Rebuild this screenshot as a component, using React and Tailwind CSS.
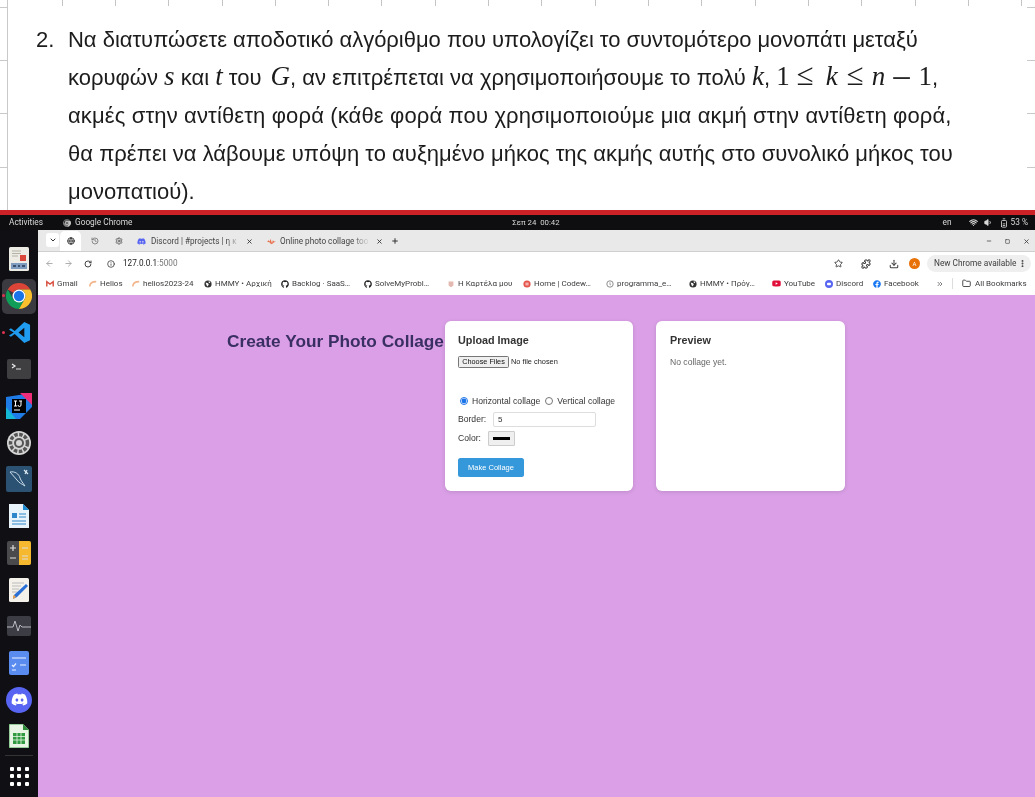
import React from "react";
import { ArrowLeft, ArrowRight, RotateCw, Info, Star, Puzzle, Download, MoreVertical, X, Minus, Plus, ChevronDown, Folder, Globe, ChevronsRight, History, Settings, Wifi, Volume1, BatteryMedium, Square } from "lucide-react";
import { FaGithub, FaDiscord, FaFacebook, FaYoutube } from "react-icons/fa";

const M = ({ children, className = "" }) => <span className={`font-['Liberation_Serif',serif] italic text-[27px] leading-[0] ${className}`}>{children}</span>;
const R = ({ children, className = "" }) => <span className={`font-['Liberation_Serif',serif] text-[27px] leading-[0] ${className}`}>{children}</span>;

function DocTicks() {
  const xs = [62, 115, 168, 222, 275, 328, 381, 435, 488, 541, 595, 648, 701, 755, 808, 861, 915, 968, 1021];
  return (
    <svg className="absolute inset-0" width="1035" height="210" aria-hidden="true">
      <path d="M7.5 0V210" stroke="#c9c9c9" strokeWidth="1" />
      {xs.map((x) => <path key={x} d={`M${x}.5 0V6`} stroke="#c4c4c4" />)}
      {[7, 60, 113, 167].map((y) => <path key={y} d={`M0 ${y}.5H7`} stroke="#c9c9c9" />)}
      {[7, 60, 113, 167].map((y) => <path key={y} d={`M1027 ${y}.5H1035`} stroke="#c9c9c9" />)}
    </svg>
  );
}

function Doc() {
  return (
    <div className="relative h-[210px] bg-white overflow-hidden font-['Liberation_Sans',sans-serif] text-[22px] text-[#1c1c1c]">
      <DocTicks />
      <div className="relative flex pl-[36px] pt-[21px]">
        <div className="w-[32px] h-[38px] leading-[38px]">2.</div>
        <div className="whitespace-nowrap leading-[38px]">
          <div className="h-[38px] tracking-[-0.02px]">Να διατυπώσετε αποδοτικό αλγόριθμο που υπολογίζει το συντομότερο μονοπάτι μεταξύ</div>
          <div className="h-[38px]">κορυφών <M>s</M> και <M>t</M> του <M className="ml-[3px]">G</M>, αν επιτρέπεται να χρησιμοποιήσουμε το πολύ <M>k</M>, <R>1</R><R className="ml-[7px] text-[31px]">≤</R><M className="ml-[12px]">k</M><R className="ml-[9px] text-[31px]">≤</R><M className="ml-[8px]">n</M><R className="ml-[6px] text-[36px] relative top-[5px]">−</R><R className="ml-[7px]">1</R>,</div>
          <div className="h-[38px] tracking-[0.14px]">ακμές στην αντίθετη φορά (κάθε φορά που χρησιμοποιούμε μια ακμή στην αντίθετη φορά,</div>
          <div className="h-[38px] tracking-[0.02px]">θα πρέπει να λάβουμε υπόψη το αυξημένο μήκος της ακμής αυτής στο συνολικό μήκος του</div>
          <div className="h-[38px]">μονοπατιού).</div>
        </div>
      </div>
    </div>
  );
}

function ChromeIcon({ className = "" }) {
  return (
    <svg viewBox="0 0 48 48" className={className} aria-hidden="true">
      <path d="M3.2 12 A24 24 0 0 1 44.800 12 L24 12 A12 12 0 0 0 13.600 18 Z" fill="#db4437" />
      <path d="M3.2 12 A24 24 0 0 0 24 48 L34.400 30 L24 36 L13.600 30 Z" fill="#0f9d58" />
      <path d="M44.800 12 A24 24 0 0 1 24 48 L34.400 30 A12 12 0 0 0 24 12 Z" fill="#fbc02d" />
      <circle cx="24" cy="24" r="12" fill="#fff" />
      <circle cx="24" cy="24" r="9.500" fill="#1a73e8" />
    </svg>
  );
}

function TopBar() {
  return (
    <div className="h-[15px] bg-[#0e0e10] flex items-center text-[#d8d8d8] text-[8.300px] font-['Roboto',sans-serif] whitespace-nowrap">
      <span className="ml-[9px] w-[54px]">Activities</span>
      <ChromeIcon className="w-[8px] h-[8px] grayscale" />
      <span className="ml-[4px]">Google Chrome</span>
      <div className="flex-1 flex justify-center"><span className="ml-[-3px] text-[7.800px]">Σεπ 24&nbsp;&nbsp;00:42</span></div>
      <span className="mr-[17px]">en</span>
      <Wifi className="w-[9px] h-[9px] mr-[6px]" strokeWidth={3} />
      <Volume1 className="w-[9px] h-[9px] mr-[6px]" fill="currentColor" />
      <BatteryMedium className="w-[10px] h-[10px] mr-[2px] -rotate-90" />
      <span className="mr-[7px]">53 %</span>
    </div>
  );
}

function TabStrip() {
  return (
    <div className="h-[22px] bg-[#e9e9e9] border-b border-[#cfcfcf] flex items-end text-[8.200px] text-[#3c3c3c] font-['Roboto',sans-serif] whitespace-nowrap">
      <div className="w-[22px] h-[16px] mb-[3px] flex items-center justify-center">
        <div className="w-[13px] h-[14px] ml-[7px] rounded-[3px] bg-white flex items-center justify-center"><ChevronDown className="w-[8px] h-[8px] text-[#333]" strokeWidth={3} /></div>
      </div>
      <div className="w-[21px] h-[20px] bg-white rounded-t-[5px] flex items-center justify-center"><Globe className="w-[8px] h-[8px] text-[#444]" strokeWidth={3} /></div>
      <div className="w-[27px] h-[20px] flex items-center justify-center"><History className="w-[8px] h-[8px] text-[#777]" strokeWidth={2.5} /></div>
      <div className="w-[21px] h-[20px] flex items-center justify-center"><Settings className="w-[8px] h-[8px] text-[#666]" strokeWidth={3} /></div>
      <div className="w-[130px] h-[20px] flex items-center pl-[8px]">
        <FaDiscord className="w-[9px] h-[9px] text-[#5865f2]" />
        <span className="ml-[5px] w-[89px] bg-gradient-to-r from-[#3c3c3c] from-[85%] to-transparent bg-clip-text text-transparent">Discord | #projects | η κ</span>
        <X className="w-[7px] h-[7px] ml-[6px] text-[#333]" strokeWidth={3} />
      </div>
      <div className="w-[127px] h-[20px] flex items-center pl-[8px]">
        <svg viewBox="0 0 10 10" className="w-[9px] h-[9px]" aria-hidden="true"><path d="M0 5l2-1.500L3 5l1-3 1.500 5 1-3.500 1.500 1.500H10L7.500 6 6 7.500 4.500 8 3 6z" fill="#e8734f" /></svg>
        <span className="ml-[4px] w-[90px] bg-gradient-to-r from-[#3c3c3c] from-[80%] to-transparent bg-clip-text text-transparent">Online photo collage too</span>
        <X className="w-[7px] h-[7px] ml-[6px] text-[#333]" strokeWidth={3} />
      </div>
      <div className="h-[20px] flex items-center ml-[5px]"><Plus className="w-[8px] h-[8px] text-[#333]" strokeWidth={3} /></div>
      <div className="flex-1" />
      <div className="h-[20px] flex items-center gap-[13px] pr-[5px] text-[#444]">
        <Minus className="w-[6px] h-[6px]" strokeWidth={3} />
        <Square className="w-[5px] h-[5px]" strokeWidth={3} />
        <X className="w-[7px] h-[7px]" strokeWidth={3} />
      </div>
    </div>
  );
}

function AddressBar() {
  return (
    <div className="h-[23px] bg-white flex items-center text-[#555] font-['Roboto',sans-serif] whitespace-nowrap">
      <ArrowLeft className="w-[9px] h-[9px] ml-[7px] text-[#aaa]" strokeWidth={2.5} />
      <ArrowRight className="w-[9px] h-[9px] ml-[10px] text-[#aaa]" strokeWidth={2.5} />
      <RotateCw className="w-[8px] h-[8px] ml-[11px] text-[#444]" strokeWidth={3} />
      <Info className="w-[8px] h-[8px] ml-[15px] text-[#444]" strokeWidth={2.5} />
      <span className="ml-[8px] text-[8.200px] text-[#222]">127.0.0.1<span className="text-[#777]">:5000</span></span>
      <div className="flex-1" />
      <Star className="w-[9px] h-[9px] text-[#444] mr-[18px]" strokeWidth={2.5} />
      <Puzzle className="w-[10px] h-[10px] text-[#444] mr-[18px]" strokeWidth={2.5} />
      <Download className="w-[10px] h-[10px] text-[#444] mr-[10px]" strokeWidth={2.5} />
      <div className="w-[11px] h-[11px] rounded-full bg-[#e8710a] text-white text-[6px] flex items-center justify-center mr-[7px]">A</div>
      <div className="w-[104px] h-[17px] rounded-full bg-[#efefef] flex items-center pl-[7px] text-[8.300px] text-[#3c3c3c] mr-[4px]">
        <span className="w-[84px]">New Chrome available</span>
        <MoreVertical className="w-[9px] h-[9px]" strokeWidth={3} />
      </div>
    </div>
  );
}

const Leaf = ({ c = "#f2b48a" }) => <svg viewBox="0 0 10 10" className="w-[8px] h-[8px]" aria-hidden="true"><path d="M1 8C1 4 4 2 9 2" fill="none" stroke={c} strokeWidth="2" /></svg>;
const G = ({ Icon = FaGithub }) => <Icon className="w-[8px] h-[8px] text-[#222]" />;
const GlobeB = () => <svg viewBox="0 0 10 10" className="w-[8px] h-[8px]" aria-hidden="true"><circle cx="5" cy="5" r="4.500" fill="#333" /><path d="M2 3l3 1 1 2-2 2-1-2zM6 1l2 2-2 1z" fill="#fff" /></svg>;

const bookmarks = [
  { w: "w-[43px]", t: "Gmail", i: <svg viewBox="0 0 10 10" className="w-[8px] h-[8px]" aria-hidden="true"><path d="M1 8V2l4 3 4-3v6" fill="none" stroke="#d8503f" strokeWidth="1.800" /></svg> },
  { w: "w-[43px]", t: "Helios", i: <Leaf /> },
  { w: "w-[72px]", t: "helios2023-24", i: <Leaf /> },
  { w: "w-[77px]", t: "HMMY • Αρχική", i: <GlobeB /> },
  { w: "w-[83px]", t: "Backlog · SaaS…", i: <G /> },
  { w: "w-[83px]", t: "SolveMyProbl…", i: <G /> },
  { w: "w-[76px]", t: "Η Καρτέλα μου", i: <svg viewBox="0 0 10 10" className="w-[8px] h-[8px]" aria-hidden="true"><path d="M2 2h6v5l-3 2-3-2z" fill="#e3b8b0" /></svg> },
  { w: "w-[83px]", t: "Home | Codew…", i: <svg viewBox="0 0 10 10" className="w-[8px] h-[8px]" aria-hidden="true"><circle cx="5" cy="5" r="4.500" fill="#e5534b" /><path d="M3 4h4M3 6h4" stroke="#fff" /></svg> },
  { w: "w-[83px]", t: "programma_e…", i: <svg viewBox="0 0 10 10" className="w-[8px] h-[8px]" aria-hidden="true"><circle cx="5" cy="5" r="4" fill="none" stroke="#888" strokeWidth="1.200" /><path d="M5 3v3h1" stroke="#888" fill="none" /></svg> },
  { w: "w-[83px]", t: "HMMY • Πρόγ…", i: <GlobeB /> },
  { w: "w-[53px]", t: "YouTube", i: <FaYoutube className="w-[9px] h-[9px] text-[#e0103a]" /> },
  { w: "w-[48px]", t: "Discord", i: <svg viewBox="0 0 10 10" className="w-[8px] h-[8px]" aria-hidden="true"><circle cx="5" cy="5" r="5" fill="#5865f2" /><rect x="2.500" y="3.500" width="5" height="3" rx="1.200" fill="#fff" /></svg> },
  { w: "w-[68px]", t: "Facebook", i: <FaFacebook className="w-[8px] h-[8px] text-[#1877f2]" /> },
];

function BookmarkBar() {
  return (
    <div className="h-[20px] bg-white flex items-center text-[8px] text-[#3c3c3c] font-['Roboto',sans-serif] whitespace-nowrap pl-[6px] pb-[3px]">
      {bookmarks.map((b) => (
        <div key={b.t} className={`${b.w} flex items-center gap-[3px] pl-[2px]`}>
          {b.i}
          <span>{b.t}</span>
        </div>
      ))}
      <ChevronsRight className="w-[8px] h-[8px] text-[#666] ml-[-3px]" strokeWidth={2.5} />
      <div className="w-px h-[11px] bg-[#ddd] ml-[8px]" />
      <Folder className="w-[9px] h-[9px] text-[#444] ml-[9px]" strokeWidth={2.5} />
      <span className="ml-[4px]">All Bookmarks</span>
    </div>
  );
}

function Slot({ children, active, dot }) {
  return (
    <div className="relative h-[36.700px] flex items-center justify-center">
      {active && <div className="absolute left-[2px] top-[1px] w-[34px] h-[35px] rounded-[5px] bg-[#3a3a40]" />}
      {dot && <div className="absolute left-[1.500px] top-[16.500px] w-[3px] h-[3px] rounded-full bg-[#e0344f]" />}
      <div className="relative flex">{children}</div>
    </div>
  );
}

function Dock() {
  return (
    <div className="w-[38px] bg-[#0f0f14] shrink-0 pt-[11px] flex flex-col">
      <Slot>
        <svg viewBox="0 0 20 24" className="w-[20px] h-[24px]" aria-hidden="true">
          <rect width="20" height="24" rx="1.500" fill="#ecebe4" />
          <path d="M3 4h9M3 6.500h9M3 9h6" stroke="#b5b2a8" />
          <rect x="11" y="8" width="6" height="6" fill="#d9483b" />
          <rect x="2" y="16" width="16" height="6" fill="#7d9cc0" />
          <path d="M4 19h3M9 19h2M13 19h3" stroke="#26384f" strokeWidth="1.500" />
        </svg>
      </Slot>
      <Slot active dot><ChromeIcon className="w-[26px] h-[26px]" /></Slot>
      <Slot dot>
        <svg viewBox="0 0 24 24" className="w-[23px] h-[23px]" aria-hidden="true">
          <path d="M17 1l6 3v16l-6 3L7 13.500l-4 3L1 15l5-3-5-3 2-1.500 4 3z" fill="#1f9cf0" />
          <path d="M17 7l-6 5 6 5z" fill="#0f0f14" />
        </svg>
      </Slot>
      <Slot>
        <svg viewBox="0 0 24 20" className="w-[24px] h-[20px]" aria-hidden="true">
          <rect width="24" height="20" rx="2" fill="#3f3f42" />
          <path d="M5 5l3 2-3 2" stroke="#eee" strokeWidth="1.200" fill="none" />
          <path d="M9 10h5" stroke="#ddd" />
        </svg>
      </Slot>
      <Slot>
        <svg viewBox="0 0 26 26" className="w-[26px] h-[26px]" aria-hidden="true">
          <path d="M0 4L26 0v14l-12 12H0z" fill="#1f7ce6" />
          <path d="M14 0h12v12z" fill="#ee2d7a" />
          <path d="M0 14v12h10z" fill="#14b8d4" />
          <rect x="6" y="6" width="14" height="14" fill="#000" />
          <path d="M8 17h6" stroke="#fff" />
          <path d="M8 8h3M9.500 8v5M8 13h3M13 8h3M15 8v4a1.500 1.500 0 01-3 0" stroke="#fff" fill="none" />
        </svg>
      </Slot>
      <Slot>
        <svg viewBox="0 0 24 24" className="w-[24px] h-[24px]" aria-hidden="true">
          <circle cx="12" cy="12" r="12" fill="#d5d5d5" />
          <circle cx="12" cy="12" r="8.500" fill="none" stroke="#555" strokeWidth="3.500" strokeDasharray="3.500 1.500" />
          <circle cx="12" cy="12" r="5" fill="#555" />
          <circle cx="12" cy="12" r="3" fill="#d5d5d5" />
        </svg>
      </Slot>
      <Slot>
        <svg viewBox="0 0 26 26" className="w-[26px] h-[26px]" aria-hidden="true">
          <rect width="26" height="26" rx="2" fill="#2b5173" />
          <path d="M4 6c5-1 9 2 10 6 1 3 3 5 5 8-3-2-6-3-8-6C9 11 6 9 4 6z" fill="none" stroke="#c9dbe8" strokeWidth="1" />
          <path d="M18 4l4 4M21 4l-2 4" stroke="#dbe7ee" strokeWidth="1.200" />
        </svg>
      </Slot>
      <Slot>
        <svg viewBox="0 0 20 24" className="w-[20px] h-[24px]" aria-hidden="true">
          <path d="M0 0h14l6 6v18H0z" fill="#e9f3fb" />
          <path d="M14 0l6 6h-6z" fill="#1b8ad0" />
          <rect x="3" y="9" width="5" height="5" fill="#2f85c9" />
          <path d="M10 10h7M10 13h7M3 17h14M3 20h14" stroke="#2f85c9" strokeWidth="1.200" />
        </svg>
      </Slot>
      <Slot>
        <svg viewBox="0 0 24 24" className="w-[24px] h-[24px]" aria-hidden="true">
          <rect width="24" height="24" rx="2" fill="#4a4a4d" />
          <path d="M12 0h10a2 2 0 012 2v20a2 2 0 01-2 2H12z" fill="#f5b82e" />
          <path d="M3 7h6M6 4v6M3 17h6M15 7h6M15 15h6M15 18h6" stroke="#ddd" strokeWidth="1.200" />
        </svg>
      </Slot>
      <Slot>
        <svg viewBox="0 0 20 24" className="w-[20px] h-[24px]" aria-hidden="true">
          <rect width="20" height="24" rx="1.500" fill="#f3f1ea" />
          <path d="M3 5h12M3 8h9M3 11h7M3 14h5" stroke="#bbb" />
          <path d="M17 6l2 2-11 11-4 2 1-4z" fill="#2a6fd6" />
          <path d="M4 18l1-1 2 2-3 2z" fill="#e8a04a" />
        </svg>
      </Slot>
      <Slot>
        <svg viewBox="0 0 24 20" className="w-[24px] h-[20px]" aria-hidden="true">
          <rect width="24" height="20" rx="2" fill="#3c3c44" />
          <path d="M0 11h6l2-6 3 10 2-6 2 2h9" stroke="#b9b9c2" fill="none" strokeWidth="1" />
        </svg>
      </Slot>
      <Slot>
        <svg viewBox="0 0 20 24" className="w-[20px] h-[24px]" aria-hidden="true">
          <rect width="20" height="24" rx="2" fill="#5a8cf0" />
          <path d="M3 14l1.500 1.500L7 12.500M11 14h6M3 19h4M3 7h14" stroke="#eaf0ff" strokeWidth="1.200" fill="none" />
        </svg>
      </Slot>
      <Slot>
        <div className="w-[26px] h-[26px] rounded-full bg-[#5865f2] flex items-center justify-center"><FaDiscord className="w-[17px] h-[17px] text-white" /></div>
      </Slot>
      <Slot>
        <svg viewBox="0 0 20 24" className="w-[20px] h-[24px]" aria-hidden="true">
          <path d="M0 0h14l6 6v18H0z" fill="#e8f5e4" />
          <path d="M14 0l6 6h-6z" fill="#2e8b3a" />
          <path d="M0 0h14M0 0v24h20V6" stroke="#43a34e" fill="none" />
          <rect x="4" y="9" width="12" height="11" fill="#2f9a40" />
          <path d="M4 12.500h12M4 16h12M8 9v11M12 9v11" stroke="#e8f5e4" strokeWidth="0.800" />
        </svg>
      </Slot>
      <div className="h-px bg-[#333] mx-[5px]" />
      <div className="flex justify-center mt-[11px]">
        <div className="grid grid-cols-3 gap-[3.500px]">
          {[0, 1, 2, 3, 4, 5, 6, 7, 8].map((n) => <div key={n} className="w-[4px] h-[4px] rounded-[1px] bg-white" />)}
        </div>
      </div>
    </div>
  );
}

function Page() {
  return (
    <div className="flex-1 bg-[#da9fe6] flex items-start pt-[26px] pl-[189px] font-['Liberation_Sans',sans-serif]">
      <h1 className="w-[218px] mt-[9px] text-[17.250px] leading-[22px] font-bold text-[#3a2f63] whitespace-nowrap">Create Your Photo Collage</h1>
      <section className="w-[188px] h-[170px] bg-white rounded-[6px] shadow-[0_1px_4px_rgba(0,0,0,0.12)] pl-[13px] pt-[13px] text-[8.600px] text-[#333]">
        <h2 className="text-[10.800px] leading-[13px] font-bold text-[#333]">Upload Image</h2>
        <div className="flex items-center mt-[9px] h-[12px]">
          <button className="w-[51px] h-[12px] bg-[#efefef] border border-[#767676] rounded-[1.500px] text-[7.300px] text-[#111] leading-none">Choose Files</button>
          <span className="ml-[2px] text-[7.400px] text-[#222]">No file chosen</span>
        </div>
        <div className="flex items-center mt-[27px] h-[12px] whitespace-nowrap">
          <input type="radio" name="layout" defaultChecked className="w-[8px] h-[8px] ml-[2px] accent-[#1a73e8]" />
          <label className="ml-[4px]">Horizontal collage</label>
          <input type="radio" name="layout" className="w-[8px] h-[8px] ml-[5px]" />
          <label className="ml-[4px]">Vertical collage</label>
        </div>
        <div className="flex items-center mt-[4px] h-[16px]">
          <label className="w-[35px]">Border:</label>
          <input defaultValue="5" className="w-[103px] h-[15px] border border-[#ddd] rounded-[2px] px-[4px] text-[8px] text-[#333] outline-none" />
        </div>
        <div className="flex items-center mt-[3px] h-[16px]">
          <label className="w-[30px]">Color:</label>
          <div className="w-[27px] h-[15px] bg-[#efefef] border border-[#ccc] rounded-[1px] flex items-center justify-center"><div className="w-[17px] h-[3px] bg-black" /></div>
        </div>
        <button className="block mt-[12px] w-[66px] h-[19px] bg-[#3498db] rounded-[2.500px] text-white text-[7.500px]">Make Collage</button>
      </section>
      <section className="w-[189px] h-[170px] ml-[23px] bg-white rounded-[6px] shadow-[0_1px_4px_rgba(0,0,0,0.12)] pl-[14px] pt-[13px]">
        <h2 className="text-[10.800px] leading-[13px] font-bold text-[#333]">Preview</h2>
        <p className="mt-[10px] text-[8.600px] leading-[11px] text-[#666]">No collage yet.</p>
      </section>
    </div>
  );
}

export default function App() {
  return (
    <div className="w-[1035px] h-[797px] overflow-hidden flex flex-col bg-white blur-[0.3px]">
      <Doc />
      <div className="h-[5px] bg-[#cc2227] shrink-0" />
      <TopBar />
      <div className="flex flex-1 min-h-0">
        <Dock />
        <div className="flex-1 flex flex-col min-w-0">
          <TabStrip />
          <AddressBar />
          <BookmarkBar />
          <Page />
        </div>
      </div>
    </div>
  );
}
